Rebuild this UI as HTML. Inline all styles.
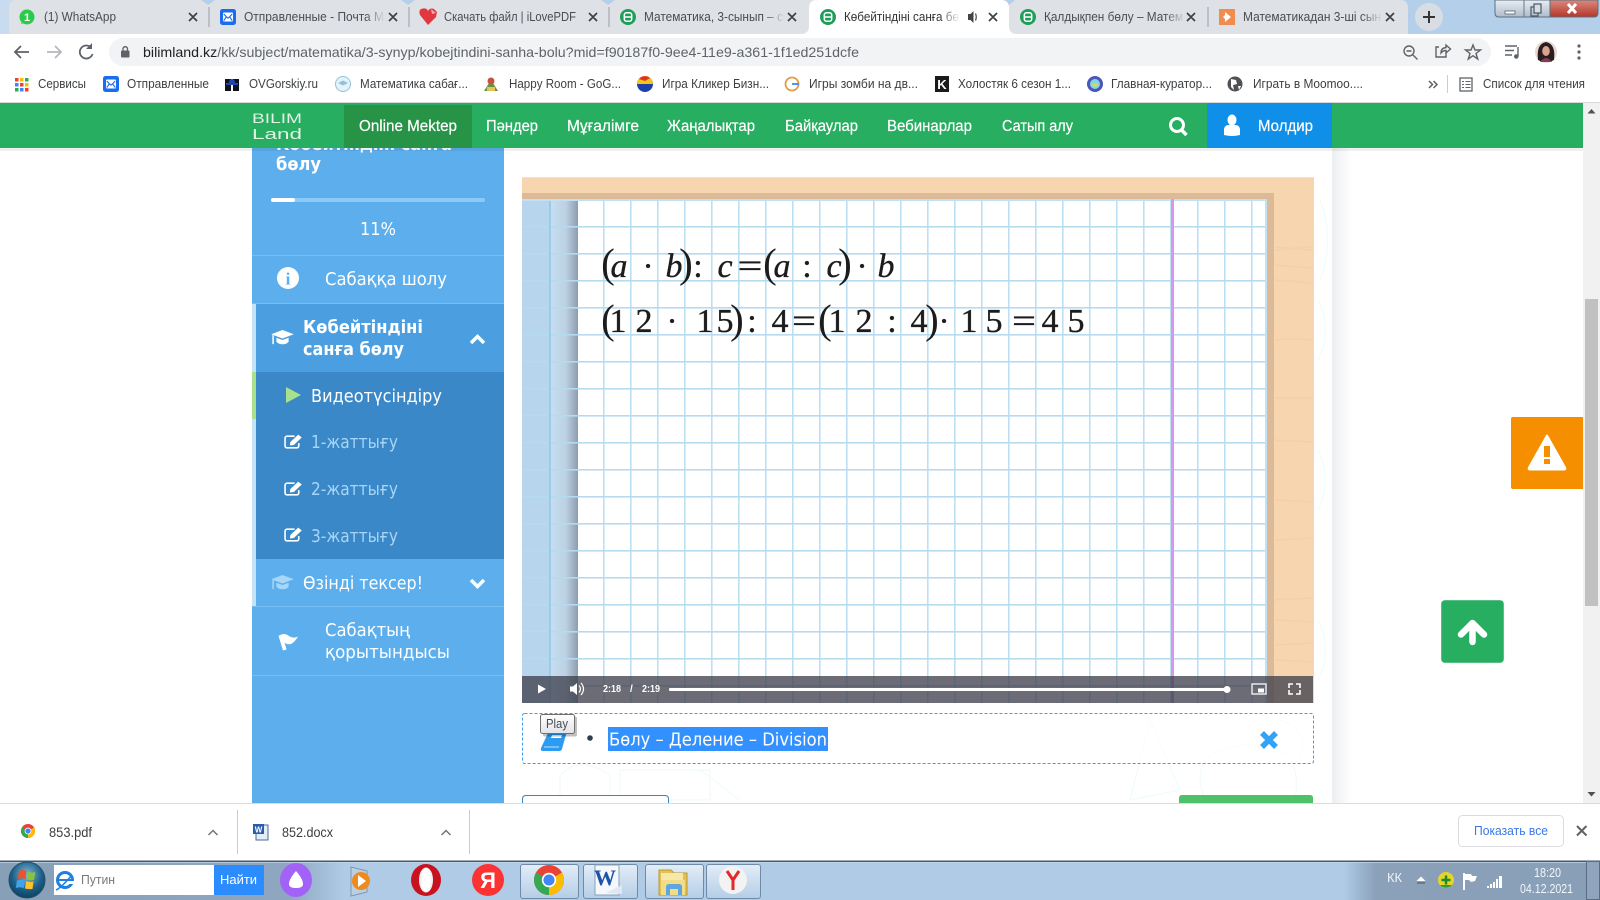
<!DOCTYPE html>
<html lang="kk"><head><meta charset="utf-8"><title>Көбейтіндіні санға бөлу</title>
<style>
html,body{margin:0;padding:0;width:1600px;height:900px;overflow:hidden;background:#fff}
svg{display:block}
text{white-space:pre}
.ui{font-family:"Liberation Sans","DejaVu Sans",sans-serif;font-size:12.5px;fill:#3c4043}
.tab{font-size:12.5px;fill:#4a4d52}
.bm{font-size:12.5px;fill:#3c4043}
.nav{font-family:"Liberation Sans","DejaVu Sans",sans-serif;font-size:15.5px;fill:#fff;stroke:#fff;stroke-width:.2px}
.sb{font-family:"DejaVu Sans",sans-serif;font-size:18px;fill:#fff}
.sbb{font-family:"DejaVu Sans",sans-serif;font-size:18px;font-weight:bold;fill:#fff}
.ex{fill:#a6d5f7}
.m{font-family:"Liberation Serif","DejaVu Serif",serif;font-size:34px;fill:#1c1c1c;stroke:#1c1c1c;stroke-width:.35px;text-anchor:middle}
.mp{font-size:41px;stroke-width:0}
.mi{font-style:italic}
.ctl{font-family:"Liberation Sans",sans-serif;font-size:10px;font-weight:bold;fill:#fff}
</style></head><body>
<svg width="1600" height="900" viewBox="0 0 1600 900" xmlns="http://www.w3.org/2000/svg">
<defs>
<linearGradient id="fade" x1="0" x2="1" y1="0" y2="0"><stop offset="0" stop-color="#dee1e6" stop-opacity="0"/><stop offset="1" stop-color="#dee1e6"/></linearGradient>
<linearGradient id="fadeW" x1="0" x2="1" y1="0" y2="0"><stop offset="0" stop-color="#fff" stop-opacity="0"/><stop offset="1" stop-color="#fff"/></linearGradient>
<linearGradient id="marg" x1="0" x2="1" y1="0" y2="0"><stop offset="0" stop-color="#c6dff1"/><stop offset=".55" stop-color="#bdd2e4"/><stop offset="1" stop-color="#8c9eae"/></linearGradient>
<linearGradient id="shad" x1="0" x2="1" y1="0" y2="0"><stop offset="0" stop-color="#eceef1"/><stop offset="1" stop-color="#fff"/></linearGradient>
<linearGradient id="tb" x1="0" x2="1" y1="0" y2="0"><stop offset="0" stop-color="#889fb8"/><stop offset=".18" stop-color="#8ea6c0"/><stop offset=".215" stop-color="#afcbe6"/><stop offset=".84" stop-color="#afcbe6"/><stop offset=".86" stop-color="#8aa1b9"/><stop offset="1" stop-color="#889fb7"/></linearGradient>
<linearGradient id="btn" x1="0" x2="0" y1="0" y2="1"><stop offset="0" stop-color="#e3eef8"/><stop offset="1" stop-color="#b4cde6"/></linearGradient>
<linearGradient id="tip" x1="0" x2="0" y1="0" y2="1"><stop offset="0" stop-color="#fff"/><stop offset="1" stop-color="#e2e3ea"/></linearGradient>
<radialGradient id="orb" cx=".5" cy=".35" r=".7"><stop offset="0" stop-color="#7fb8d8"/><stop offset=".6" stop-color="#1b5f86"/><stop offset="1" stop-color="#0d3b58"/></radialGradient>
<linearGradient id="ctrl" x1="0" x2="0" y1="0" y2="1"><stop offset="0" stop-color="#e8edf3"/><stop offset="1" stop-color="#aebccb"/></linearGradient>
<linearGradient id="clo" x1="0" x2="0" y1="0" y2="1"><stop offset="0" stop-color="#d98a7e"/><stop offset="1" stop-color="#b5362a"/></linearGradient>
<pattern id="gv" patternUnits="userSpaceOnUse" x="603" y="0" width="27" height="10"><rect x="0" y="0" width="1.6" height="10" fill="#bbdff3"/></pattern>
<pattern id="gh" patternUnits="userSpaceOnUse" x="0" y="226" width="10" height="27"><rect x="0" y="0" width="10" height="1.6" fill="#b6daee"/></pattern>
<symbol id="chrome" viewBox="-1 -1 2 2">
<circle r="1" fill="#ea4335"/>
<path d="M0 0L.866 -.5A1 1 0 0 1 0 1Z" fill="#fbbc04"/>
<path d="M0 0L0 1A1 1 0 0 1 -.866 -.5Z" fill="#34a853"/>
<circle r=".48" fill="#fff"/><circle r=".37" fill="#4285f4"/>
</symbol>
<symbol id="bfav" viewBox="0 0 16 16">
<circle cx="8" cy="8" r="8" fill="#1e9e58"/>
<rect x="4.3" y="3.8" width="7.4" height="8.4" rx="2.2" fill="none" stroke="#fff" stroke-width="1.5"/>
<path d="M4.3 8H11.7" stroke="#fff" stroke-width="1.5"/>
</symbol>
<symbol id="mail" viewBox="0 0 16 16">
<rect width="16" height="16" rx="2.5" fill="#1a6cf0"/>
<rect x="3" y="3.5" width="10" height="9" rx="1" fill="#fff"/>
<path d="M3.8 5l2.6 2.8L8 9.2l1.6-1.4L12.2 5M3.8 11.5l2.6-3.7M12.2 11.5L9.6 7.8" fill="none" stroke="#1a6cf0" stroke-width="1.1"/>
</symbol>
<symbol id="cap" viewBox="0 0 24 17">
<path d="M12 0L24 4.5 12 9 0 4.5Z" fill="currentColor"/>
<path d="M5.5 8.2V12.5C7.5 14.6 9.5 15.2 12 15.2S17 14.4 18.5 12.5V8.2L12 10.6Z" fill="currentColor"/>
<path d="M2 5.5V15" stroke="currentColor" stroke-width="1.6"/>
</symbol>
<symbol id="edit" viewBox="0 0 18 14">
<path d="M14 8.5V11.2A1.8 1.8 0 0 1 12.2 13H2.8A1.8 1.8 0 0 1 1 11.2V3.8A1.8 1.8 0 0 1 2.8 2H10" fill="none" stroke="#fff" stroke-width="1.5"/>
<path d="M6 7.5L13.5 0.5L16.8 3.2L9.3 10.3L5.6 10.8Z" fill="#fff"/>
</symbol>
</defs>

<!-- tab strip -->
<g id="tabs">
<rect width="1600" height="34" fill="#b4cfe9"/>
<rect width="200" height="34" fill="#c9dcef"/>
<path d="M9 34V8Q9 0 17 0H1400Q1408 0 1408 8V34Z" fill="#dee1e6"/>
<path d="M209 7V27M409 7V27M609 7V27M1208 7V27" stroke="#9aa0a6" stroke-width="1"/>
<path d="M201 0L208 5 215 0ZM401 0L408 5 415 0ZM601 0L608 5 615 0ZM1003 0L1009 5 1015 0Z" fill="#b4cfe9"/>
<path d="M801 34Q809 34 809 26V8Q809 0 817 0H1001Q1009 0 1009 8V26Q1009 34 1017 34Z" fill="#fff"/>
<!-- favicons -->
<circle cx="27" cy="17" r="7.5" fill="#2bcb4a"/><path d="M21 24l1.5-4 3 2.5Z" fill="#2bcb4a"/>
<text x="27" y="21" font-family="Liberation Sans" font-size="11" font-weight="bold" fill="#fff" text-anchor="middle">1</text>
<use href="#mail" x="220" y="9" width="16" height="16"/>
<path d="M428 25L420 15Q418 9 423 8.500Q427 8 428 11Q430 7.500 434 9L437 12 436 17Z" fill="#e2373f"/><path d="M431 9l5 4-4 1Z" fill="#f7a9ad"/>
<use href="#bfav" x="620" y="9" width="16" height="16"/>
<use href="#bfav" x="820" y="9" width="16" height="16"/>
<use href="#bfav" x="1020" y="9" width="16" height="16"/>
<rect x="1219" y="9" width="16" height="16" fill="#ef8c4e"/><path d="M1225 12l6 5-6 5v-3l-2-2 2-2Z" fill="#fff"/>
<!-- titles -->
<g class="ui">
<text class="ui tab" x="44" y="21" textLength="72" lengthAdjust="spacingAndGlyphs">(1) WhatsApp</text>
<text class="ui tab" x="244" y="21" textLength="140" lengthAdjust="spacingAndGlyphs">Отправленные - Почта M</text>
<text class="ui tab" x="444" y="21" textLength="132" lengthAdjust="spacingAndGlyphs">Скачать файл | iLovePDF</text>
<text class="ui tab" x="644" y="21" textLength="139" lengthAdjust="spacingAndGlyphs">Математика, 3-сынып – с</text>
<text class="ui tab" x="844" y="21" textLength="115" lengthAdjust="spacingAndGlyphs" style="fill:#333">Көбейтіндіні санға бө</text>
<text class="ui tab" x="1044" y="21" textLength="139" lengthAdjust="spacingAndGlyphs">Қалдықпен бөлу – Матем</text>
<text class="ui tab" x="1243" y="21" textLength="138" lengthAdjust="spacingAndGlyphs">Математикадан 3-ші сын</text>
</g>
<rect x="365" y="6" width="20" height="22" fill="url(#fade)"/>
<rect x="765" y="6" width="20" height="22" fill="url(#fade)"/>
<rect x="940" y="6" width="20" height="22" fill="url(#fadeW)"/>
<rect x="1165" y="6" width="20" height="22" fill="url(#fade)"/>
<rect x="1362" y="6" width="20" height="22" fill="url(#fade)"/>
<!-- close x -->
<g stroke="#3c4043" stroke-width="1.7" fill="none">
<path d="M189 13l8 8M197 13l-8 8M389 13l8 8M397 13l-8 8M589 13l8 8M597 13l-8 8M788 13l8 8M796 13l-8 8M989 13l8 8M997 13l-8 8M1187 13l8 8M1195 13l-8 8M1386 13l8 8M1394 13l-8 8"/>
</g>
<path d="M968 14h2.500l3-3v12l-3-3H968Z" fill="#444"/><path d="M975.500 13.500q1.500 3.500 0 7" fill="none" stroke="#444" stroke-width="1.200"/>
<circle cx="1429" cy="17" r="14" fill="#d8dde3"/>
<path d="M1429 11v12M1423 17h12" stroke="#333" stroke-width="2"/>
<!-- window controls -->
<path d="M1495 0H1550V17H1499Q1495 17 1495 13Z" fill="url(#ctrl)" stroke="#5e6f80"/>
<path d="M1524 0V17" stroke="#6a7a8a"/>
<path d="M1550 0H1598V13Q1598 17 1594 17H1550Z" fill="url(#clo)" stroke="#5e6f80"/>
<rect x="1505" y="11" width="10" height="3" fill="#fff" stroke="#56616e" stroke-width=".8"/>
<rect x="1531" y="7" width="7" height="9" fill="none" stroke="#4c5763" stroke-width="1.200"/><rect x="1534" y="4" width="7" height="9" fill="#d5dde5" stroke="#4c5763" stroke-width="1.200"/>
<path d="M1568 4l8 9M1576 4l-8 9" stroke="#fff" stroke-width="3"/>
</g>

<!-- toolbar -->
<g id="toolbar">
<rect y="34" width="1600" height="34" fill="#fff"/>
<path d="M29 52H15M21 46l-6 6 6 6" fill="none" stroke="#5f6368" stroke-width="1.800"/>
<path d="M47 52H61M55 46l6 6-6 6" fill="none" stroke="#b5b8bc" stroke-width="1.800"/>
<path d="M91 47.500A6.500 6.500 0 1 0 92.500 54" fill="none" stroke="#5f6368" stroke-width="1.800"/><path d="M92 43v6h-6Z" fill="#5f6368"/>
<rect x="109" y="38" width="1382" height="28" rx="14" fill="#f1f3f4"/>
<rect x="121" y="50.500" width="8.500" height="7" rx="1" fill="#5f6368"/><path d="M123 51v-2.500a2.300 2.300 0 0 1 4.500 0V51" fill="none" stroke="#5f6368" stroke-width="1.300"/>
<text class="ui" x="143" y="57" font-size="14" textLength="716" lengthAdjust="spacingAndGlyphs" style="font-size:14px;fill:#5f6368"><tspan fill="#202124">bilimland.kz</tspan>/kk/subject/matematika/3-synyp/kobejtindini-sanha-bolu?mid=f90187f0-9ee4-11e9-a361-1f1ed251dcfe</text>
<g fill="none" stroke="#5f6368" stroke-width="1.400">
<circle cx="1409" cy="51" r="5"/><path d="M1413 55l4.500 4.500M1406.500 51h5"/>
<path d="M1446 53v4h-10v-10h3M1441 53q0-5 5-5.500V45l4.500 4-4.500 4v-2.500q-3 0-5 2.500Z"/>
<path d="M1473 45l2 5h5.500l-4.500 3.500 1.700 5.500-4.700-3.300-4.700 3.300 1.700-5.500-4.500-3.500h5.500Z"/>
<path d="M1505 46h12M1505 50.500h9M1505 55h7"/><path d="M1518 47v9" /><circle cx="1516.300" cy="56.500" r="1.600" fill="#5f6368"/>
</g>
<circle cx="1546" cy="52" r="11" fill="#e8d8d4"/><path d="M1538 60q-2-16 8-18 10 2 8 18-8 4-16 0Z" fill="#2b1d1e"/><ellipse cx="1546" cy="51" rx="3.800" ry="5" fill="#d9a48e"/><path d="M1540 62q6-8 12 0Z" fill="#7d3f55"/>
<circle cx="1579" cy="46" r="1.600" fill="#5f6368"/><circle cx="1579" cy="52" r="1.600" fill="#5f6368"/><circle cx="1579" cy="58" r="1.600" fill="#5f6368"/>
</g>

<!-- bookmarks -->
<g id="bookmarks">
<rect y="68" width="1600" height="34" fill="#fff"/><rect y="102" width="1600" height="1" fill="#d8d8d8"/>
<g>
<rect x="15" y="78" width="3.500" height="3.500" fill="#ea4335"/><rect x="20" y="78" width="3.500" height="3.500" fill="#fbbc04"/><rect x="25" y="78" width="3.500" height="3.500" fill="#34a853"/>
<rect x="15" y="83" width="3.500" height="3.500" fill="#4285f4"/><rect x="20" y="83" width="3.500" height="3.500" fill="#ea4335"/><rect x="25" y="83" width="3.500" height="3.500" fill="#fbbc04"/>
<rect x="15" y="88" width="3.500" height="3.500" fill="#34a853"/><rect x="20" y="88" width="3.500" height="3.500" fill="#4285f4"/><rect x="25" y="88" width="3.500" height="3.500" fill="#ea4335"/>
</g>
<use href="#mail" x="103" y="76" width="16" height="16"/>
<path d="M225 79h6v12h-6ZM233 79h6v12h-6Z" fill="#10131c"/><circle cx="232" cy="82" r="3" fill="#2146b0"/><path d="M226 84h12" stroke="#2146b0" stroke-width="2"/>
<circle cx="343" cy="84" r="7.500" fill="#e5f2f7" stroke="#8fc3db"/><path d="M338 83l5-2.500 5 2.500-5 2.500Z" fill="#8fc3db"/>
<path d="M484 91l7-11 7 11Z" fill="#6a8f3f"/><circle cx="491" cy="81" r="3.500" fill="#c7513e"/><rect x="487" y="87" width="8" height="4" fill="#e1c65a"/>
<circle cx="645" cy="84" r="8" fill="#1d3fa8"/><path d="M637 84a8 8 0 0 1 16 0Z" fill="#f5c518"/><path d="M639 79a8 8 0 0 1 11-1l-5 3Z" fill="#e53123"/>
<circle cx="792" cy="84" r="6.500" fill="none" stroke="#e49b44" stroke-width="1.800"/><path d="M792 84h7" stroke="#4285f4" stroke-width="1.800"/>
<rect x="935" y="76" width="14" height="16" fill="#1a1a1a"/><text x="942" y="89" font-family="Liberation Sans" font-size="13" font-weight="bold" fill="#fff" text-anchor="middle">K</text>
<circle cx="1095" cy="84" r="8" fill="#4b56b8"/><circle cx="1095" cy="84" r="5" fill="#7fd7e5"/><path d="M1091 85q4-3 8 0l-4 2Z" fill="#e6d555"/>
<circle cx="1235" cy="84" r="7.500" fill="#4e5256"/><path d="M1231 79l5 1 1 4-4 1 1 5-3-3ZM1238 86l3 0-2 4Z" fill="#fff"/>
<g class="ui">
<text class="ui bm" x="38" y="88" textLength="48" lengthAdjust="spacingAndGlyphs">Сервисы</text>
<text class="ui bm" x="127" y="88" textLength="82" lengthAdjust="spacingAndGlyphs">Отправленные</text>
<text class="ui bm" x="249" y="88" textLength="69" lengthAdjust="spacingAndGlyphs">OVGorskiy.ru</text>
<text class="ui bm" x="360" y="88" textLength="108" lengthAdjust="spacingAndGlyphs">Математика сабағ...</text>
<text class="ui bm" x="509" y="88" textLength="112" lengthAdjust="spacingAndGlyphs">Happy Room - GoG...</text>
<text class="ui bm" x="662" y="88" textLength="107" lengthAdjust="spacingAndGlyphs">Игра Кликер Бизн...</text>
<text class="ui bm" x="809" y="88" textLength="109" lengthAdjust="spacingAndGlyphs">Игры зомби на дв...</text>
<text class="ui bm" x="958" y="88" textLength="113" lengthAdjust="spacingAndGlyphs">Холостяк 6 сезон 1...</text>
<text class="ui bm" x="1111" y="88" textLength="101" lengthAdjust="spacingAndGlyphs">Главная-куратор...</text>
<text class="ui bm" x="1253" y="88" textLength="110" lengthAdjust="spacingAndGlyphs">Играть в Moomoo....</text>
<text class="ui bm" x="1483" y="88" textLength="102" lengthAdjust="spacingAndGlyphs">Список для чтения</text>
</g>
<path d="M1429 81l3.500 3.500-3.500 3.500M1433.500 81l3.500 3.500-3.500 3.500" fill="none" stroke="#5f6368" stroke-width="1.500"/>
<path d="M1447.500 75v18" stroke="#ccc"/>
<rect x="1460" y="78" width="12" height="13" fill="none" stroke="#5f6368" stroke-width="1.300"/><path d="M1462 81.500h2M1465.500 81.500h5M1462 84.500h2M1465.500 84.500h5M1462 87.500h2M1465.500 87.500h5" stroke="#5f6368"/>
</g>

<!-- page -->
<g id="page">
<rect y="103" width="1583" height="700" fill="#fff"/>
<rect x="1332" y="148" width="20" height="655" fill="url(#shad)"/>
<!-- faint doodles -->
<g fill="none" stroke="#f1fbfb" stroke-width="1.200">
<path d="M1150 720l30 70-50 10ZM1205 800q-20-50 40-55t50 55M700 770l40 30M560 775q20-20 50 0v25h-50ZM620 770h90v30h-90ZM1280 720q30 10 20 40M1320 200q15 40 0 80M1318 300q15 30 0 60M1318 450q15 30 0 60M1318 620q15 30 0 60"/>
</g>
<!-- video -->
<rect x="522" y="177" width="792" height="526" fill="#f7d5ae"/>
<rect x="522" y="177" width="792" height="1" fill="#dfe6ea"/>
<g fill="none" stroke="#f3d0a9" stroke-width="1.500">
<path d="M1275 250l38-3M1275 247l38 3M1275 265q20 2 38 3M1275 280l38 3M1275 340q20-2 38 0M1275 398h38M1275 440l38 2M1275 500l38 2M1275 540l38-2M1275 600l38-2M1275 620l38 2M1275 645l38-2M1275 660l38 2"/>
</g>
<rect x="522" y="193" width="752" height="6" fill="#dcb997"/>
<rect x="1266" y="193" width="8" height="510" fill="#dcb997"/>
<rect x="522" y="199" width="744" height="504" fill="#fff"/>
<rect x="522" y="199" width="28" height="504" fill="#b7d6ee"/>
<rect x="550" y="199" width="28" height="504" fill="url(#marg)"/>
<rect x="578" y="199" width="688" height="504" fill="url(#gv)"/>
<rect x="522" y="199" width="744" height="504" fill="url(#gh)"/>
<rect x="549" y="199" width="2" height="504" fill="#9ccbe9"/>
<rect x="522" y="199" width="744" height="2" fill="#bfe1f3"/>
<rect x="1265" y="199" width="2" height="504" fill="#c0e2f3"/>
<rect x="1171" y="199" width="3" height="504" fill="#d996ec"/>
<!-- formula -->
<g>
<text class="m mp" x="608" y="277">(</text><text class="m mi" x="619" y="277">a</text><text class="m" x="648" y="277">·</text><text class="m mi" x="674" y="277">b</text><text class="m mp" x="686" y="277">)</text><text class="m" x="698" y="277">:</text><text class="m mi" x="725" y="277">c</text>
<text class="m" x="750" y="277" textLength="25" lengthAdjust="spacingAndGlyphs">=</text>
<text class="m mp" x="770" y="277">(</text><text class="m mi" x="782" y="277">a</text><text class="m" x="807" y="277">:</text><text class="m mi" x="834" y="277">c</text><text class="m mp" x="845" y="277">)</text><text class="m" x="862" y="277">·</text><text class="m mi" x="886" y="277">b</text>
<text class="m mp" x="608" y="333">(</text><text class="m" x="618" y="332">1</text><text class="m" x="644" y="332">2</text><text class="m" x="672" y="332">·</text><text class="m" x="705" y="332">1</text><text class="m" x="725" y="332">5</text><text class="m mp" x="737" y="333">)</text><text class="m" x="752" y="332">:</text><text class="m" x="780" y="332">4</text>
<text class="m" x="804" y="332" textLength="24" lengthAdjust="spacingAndGlyphs">=</text>
<text class="m mp" x="825" y="333">(</text><text class="m" x="837" y="332">1</text><text class="m" x="864" y="332">2</text><text class="m" x="892" y="332">:</text><text class="m" x="919" y="332">4</text><text class="m mp" x="932" y="333">)</text><text class="m" x="944" y="332">·</text><text class="m" x="969" y="332">1</text><text class="m" x="994" y="332">5</text>
<text class="m" x="1024" y="332" textLength="24" lengthAdjust="spacingAndGlyphs">=</text>
<text class="m" x="1050" y="332">4</text><text class="m" x="1076" y="332">5</text>
</g>
<!-- controls -->
<rect x="522" y="676" width="791" height="27" fill="#3c3e4b" fill-opacity=".76"/>
<path d="M538 684.500l8 4.500-8 4.500Z" fill="#fff"/>
<path d="M570 686.500h3l4-3.500v12l-4-3.500h-3Z" fill="#fff"/><path d="M579 685.500q3 3.500 0 7M581 683q5 6 0 12" fill="none" stroke="#fff" stroke-width="1.200"/>
<text class="ctl" x="603" y="692" textLength="18" lengthAdjust="spacingAndGlyphs">2:18</text>
<text class="ctl" x="630" y="692">/</text>
<text class="ctl" x="642" y="692" textLength="18" lengthAdjust="spacingAndGlyphs">2:19</text>
<rect x="669" y="688" width="558" height="3" rx="1" fill="#fff"/><circle cx="1227" cy="689.500" r="3.500" fill="#fff"/>
<rect x="1252" y="684" width="14" height="10" fill="none" stroke="#e8e8e8" stroke-width="1.500"/><rect x="1258" y="688.500" width="6" height="4" fill="#fff"/>
<path d="M1289 688v-4h4M1296 684h4v4M1300 690v4h-4M1293 694h-4v-4" fill="none" stroke="#fff" stroke-width="1.600"/>
<!-- glossary row -->
<rect x="522.500" y="713.500" width="791" height="50" rx="2" fill="#fff" fill-opacity=".6" stroke="#3a9df0" stroke-dasharray="3 2"/>
<path d="M549 731h18l-5 18q-.6 2-3 2h-16q-3 0-2-3Z" fill="#2c9cf2"/><path d="M552 735h10l-1 3h-10Z" fill="#fff"/><path d="M544 747h15" stroke="#bfe2fb" stroke-width="1"/>
<rect x="541" y="714.500" width="34" height="20" rx="2" fill="#000" opacity=".25" transform="translate(2 2)"/>
<rect x="540.500" y="714.500" width="34" height="19" rx="2" fill="url(#tip)" stroke="#6f6f6f"/>
<text class="ui" x="546" y="728" textLength="22" lengthAdjust="spacingAndGlyphs" style="fill:#4a4a4a">Play</text>
<circle cx="590" cy="738" r="2.800" fill="#2d3e50"/>
<rect x="608" y="727" width="220" height="24" fill="#3390ff"/>
<text class="sb" x="609" y="745.500" textLength="218" lengthAdjust="spacingAndGlyphs">Бөлу – Деление – Division</text>
<path d="M1262 733l14 14M1276 733l-14 14" stroke="#33a3f5" stroke-width="5.500"/>
<!-- bottom buttons -->
<path d="M522.500 804V799Q522.500 795.500 526 795.500H665Q668.500 795.500 668.500 799V804" fill="#fff" stroke="#3a85c0"/>
<path d="M1179 804V798Q1179 795 1182 795H1310Q1313 795 1313 798V804Z" fill="#4fc16a"/>
<!-- sidebar -->
<rect x="252" y="148" width="252" height="655" fill="#5daeec"/>
<text class="sbb" x="276" y="150" textLength="176" lengthAdjust="spacingAndGlyphs">Көбейтіндіні санға</text>
<text class="sbb" x="276" y="170" textLength="45" lengthAdjust="spacingAndGlyphs">бөлу</text>
<rect x="271" y="198" width="214" height="4" rx="2" fill="#8cc9f8"/><rect x="271" y="198" width="24" height="4" rx="2" fill="#fff"/>
<text class="sb" x="360" y="235" textLength="36" lengthAdjust="spacingAndGlyphs">11%</text>
<rect x="252" y="255" width="252" height="1" fill="#7abff2"/>
<circle cx="288" cy="278" r="11" fill="#fff"/>
<text x="288" y="284.500" font-family="Liberation Serif" font-size="17" font-weight="bold" fill="#5daeec" text-anchor="middle">i</text>
<text class="sb" x="325" y="285" textLength="122" lengthAdjust="spacingAndGlyphs">Сабаққа шолу</text>
<rect x="252" y="303" width="252" height="1" fill="#7abff2"/>
<rect x="252" y="304" width="4" height="302" fill="#c4e3f8"/>
<rect x="252" y="372" width="4" height="47" fill="#a7e18c"/>
<rect x="256" y="304" width="248" height="68" fill="#4b9fe0"/>
<use href="#cap" x="271" y="330" width="23" height="16" color="#fff"/>
<text class="sbb" x="303" y="333" textLength="120" lengthAdjust="spacingAndGlyphs">Көбейтіндіні</text>
<text class="sbb" x="303" y="355" textLength="101" lengthAdjust="spacingAndGlyphs">санға бөлу</text>
<path d="M471 343l6.500-6.500 6.500 6.500" fill="none" stroke="#fff" stroke-width="3.500"/>
<rect x="256" y="372" width="248" height="187" fill="#3a88c8"/>
<path d="M286 387l15 8-15 8Z" fill="#a7e18c"/>
<text class="sb" x="311" y="402" textLength="131" lengthAdjust="spacingAndGlyphs">Видеотүсіндіру</text>
<use href="#edit" x="284" y="434" width="19" height="15"/>
<text class="sb ex" x="311" y="448" textLength="87" lengthAdjust="spacingAndGlyphs" style="fill:#a6d5f7">1-жаттығу</text>
<use href="#edit" x="284" y="481" width="19" height="15"/>
<text class="sb ex" x="311" y="495" textLength="87" lengthAdjust="spacingAndGlyphs" style="fill:#a6d5f7">2-жаттығу</text>
<use href="#edit" x="284" y="527" width="19" height="15"/>
<text class="sb ex" x="311" y="542" textLength="87" lengthAdjust="spacingAndGlyphs" style="fill:#a6d5f7">3-жаттығу</text>
<use href="#cap" x="271" y="575" width="23" height="16" color="#a6d6f8"/>
<text class="sb" x="303" y="589" textLength="120" lengthAdjust="spacingAndGlyphs">Өзінді тексер!</text>
<path d="M471 580l6.500 6.500 6.500-6.500" fill="none" stroke="#fff" stroke-width="3.500"/>
<rect x="252" y="606" width="252" height="1" fill="#7abff2"/>
<path d="M278.500 636Q284 632 289 636Q293 639 298 636.500Q295 642 291 644Q287 645 284.500 642.500L286.500 649.500L283 650.500Z" fill="#fff"/>
<text class="sb" x="325" y="636" textLength="85" lengthAdjust="spacingAndGlyphs">Сабақтың</text>
<text class="sb" x="325" y="658" textLength="125" lengthAdjust="spacingAndGlyphs">қорытындысы</text>
<rect x="252" y="675" width="252" height="1" fill="#7abff2"/>
<!-- floating -->
<path d="M1511 419q0-2 2-2h70v72h-70q-2 0-2-2Z" fill="#f58f00"/>
<path d="M1547 435.500l18 32q1 2-1 2h-34q-2 0-1-2Z" fill="#fff" stroke="#fff" stroke-linejoin="round" stroke-width="2"/>
<rect x="1544" y="446" width="6" height="11" fill="#f58f00"/><rect x="1544" y="459" width="6" height="5" fill="#f58f00"/>
<rect x="1441" y="600" width="63" height="63" rx="4" fill="#27ae60" stroke="#eee" stroke-width=".5"/>
<path d="M1472.500 642V624M1461 634.500l11.500-11.500L1484 634.500" fill="none" stroke="#fff" stroke-width="6.500" stroke-linecap="round" stroke-linejoin="round"/>
</g>

<!-- nav -->
<g id="nav">
<rect y="148" width="1583" height="3" fill="#000" opacity=".06"/>
<rect y="103" width="1583" height="45" fill="#27ae60"/>
<text x="252" y="123" font-family="Liberation Sans" font-size="14" fill="#dff3e6" textLength="50" lengthAdjust="spacingAndGlyphs">BILIM</text>
<text x="252" y="139" font-family="Liberation Sans" font-size="15" fill="#dff3e6" textLength="50" lengthAdjust="spacingAndGlyphs">Land</text>
<rect x="344" y="105" width="128" height="43" fill="#279347"/>
<text class="nav" x="359" y="131" textLength="98" lengthAdjust="spacingAndGlyphs">Online Mektep</text>
<text class="nav" x="486" y="131" textLength="52" lengthAdjust="spacingAndGlyphs">Пәндер</text>
<text class="nav" x="567" y="131" textLength="72" lengthAdjust="spacingAndGlyphs">Мұғалімге</text>
<text class="nav" x="667" y="131" textLength="88" lengthAdjust="spacingAndGlyphs">Жаңалықтар</text>
<text class="nav" x="785" y="131" textLength="73" lengthAdjust="spacingAndGlyphs">Байқаулар</text>
<text class="nav" x="887" y="131" textLength="85" lengthAdjust="spacingAndGlyphs">Вебинарлар</text>
<text class="nav" x="1002" y="131" textLength="71" lengthAdjust="spacingAndGlyphs">Сатып алу</text>
<circle cx="1177" cy="125" r="6.500" fill="none" stroke="#fff" stroke-width="3"/><path d="M1181.500 130l5 5" stroke="#fff" stroke-width="3.500"/>
<rect x="1207" y="103" width="125" height="45" fill="#0f8fe8"/>
<ellipse cx="1232" cy="120" rx="4.500" ry="5.500" fill="#fff"/><path d="M1224 135v-5q0-5 5-5h6q5 0 5 5v5q-8 2-16 0Z" fill="#fff"/>
<text class="nav" x="1258" y="131" textLength="55" lengthAdjust="spacingAndGlyphs">Молдир</text>
</g>

<!-- scrollbar -->
<g id="scroll">
<rect x="1583" y="103" width="17" height="700" fill="#f1f1f1"/>
<path d="M1591.500 109l4 4.500h-8Z" fill="#505050"/>
<rect x="1585" y="299" width="13" height="307" fill="#c1c1c1"/>
<path d="M1591.500 796.500l-4-4.500h8Z" fill="#505050"/>
</g>

<!-- downloads -->
<g id="downloads">
<rect y="803" width="1600" height="58" fill="#fff"/><rect y="803" width="1600" height="1" fill="#dcdcdc"/>
<use href="#chrome" x="21" y="824" width="14" height="14"/>
<text class="ui" x="49" y="837" textLength="43" lengthAdjust="spacingAndGlyphs" style="font-size:14px">853.pdf</text>
<path d="M208.500 835l4.500-4.500 4.500 4.500M441.500 835l4.500-4.500 4.500 4.500" fill="none" stroke="#70757a" stroke-width="1.500"/>
<path d="M237.500 810v44M469.500 810v44" stroke="#ccc"/>
<rect x="256" y="825" width="12" height="15" fill="#e4ecf6" stroke="#4a6a9c"/><rect x="253" y="824" width="11" height="10" fill="#2a5caa"/>
<text x="258.500" y="832.500" font-family="Liberation Sans" font-size="8" font-weight="bold" fill="#fff" text-anchor="middle">W</text>
<text class="ui" x="282" y="837" textLength="51" lengthAdjust="spacingAndGlyphs" style="font-size:14px">852.docx</text>
<rect x="1458.500" y="815.500" width="105" height="31" rx="4" fill="#fff" stroke="#dadce0"/>
<text class="ui" x="1474" y="835" textLength="74" lengthAdjust="spacingAndGlyphs" style="fill:#3b78e7">Показать все</text>
<path d="M1577 826l9.500 9.500M1586.500 826l-9.500 9.500" stroke="#5f6368" stroke-width="2"/>
</g>

<!-- taskbar -->
<g id="taskbar">
<rect y="861" width="1600" height="39" fill="url(#tb)"/>
<rect y="860.500" width="1600" height="1.500" fill="#46586b"/><rect y="862" width="1600" height="1" fill="#c8d8e8" opacity=".7"/>
<circle cx="27" cy="880" r="18" fill="url(#orb)" stroke="#23506e"/>
<path d="M19 871q4-2 7.500 0l-1 8q-4-1.500-8 0Z" fill="#e8542f"/><path d="M27.500 871.500q4 2 8 .5l-1.500 8q-4 1-7.500-.5Z" fill="#86c440"/><path d="M17 880.500q4-1.500 8 0l-1.200 7.500q-4-1.500-8 0Z" fill="#41a4ea"/><path d="M26 881q4 1.500 7.500.5l-1 7.500q-4 .5-7.500-.5Z" fill="#fbc12e"/>
<rect x="54" y="865" width="160" height="30" fill="#fff"/>
<rect x="214" y="865" width="50" height="30" fill="#2a8cff"/>
<g fill="none" stroke="#1e7fe0"><ellipse cx="65" cy="880" rx="7.500" ry="7.500" stroke-width="3"/><path d="M58 880h14" stroke-width="2"/><path d="M56 890q5-2 15-14" stroke-width="1.500"/></g>
<rect x="68" y="881" width="7" height="3" fill="#fff"/>
<text class="ui" x="81" y="884" textLength="34" lengthAdjust="spacingAndGlyphs" style="fill:#77797c">Путин</text>
<text class="ui" x="220" y="884" textLength="37" lengthAdjust="spacingAndGlyphs" style="fill:#fff">Найти</text>
<ellipse cx="296" cy="880" rx="16" ry="17" fill="#a362f7"/><path d="M296 871q7 8 7 13 0 4-7 4t-7-4q0-5 7-13Z" fill="#fff"/>
<path d="M351 867l16 4v21l-16 4Z" fill="#b9cfe2" stroke="#7f98b0"/><circle cx="361" cy="881" r="9" fill="#f18a1c"/><path d="M358 875l8 6-8 6Z" fill="#fff"/>
<ellipse cx="426" cy="880" rx="15" ry="16" fill="#c8131f"/><ellipse cx="426" cy="880" rx="7" ry="12.500" fill="#f4f1f1"/><ellipse cx="426" cy="880" rx="4.500" ry="12" fill="#fff"/>
<circle cx="488" cy="880" r="16" fill="#fb3333"/><text x="488" y="888" font-family="Liberation Sans" font-size="22" font-weight="bold" fill="#fff" text-anchor="middle">Я</text>
<g stroke="#6f8aa6" fill="url(#btn)">
<rect x="520.500" y="864.500" width="58" height="34" rx="2.500"/>
<rect x="583.500" y="864.500" width="54" height="34" rx="2.500"/>
<rect x="645.500" y="864.500" width="58" height="34" rx="2.500"/>
<rect x="706.500" y="864.500" width="54" height="34" rx="2.500"/>
</g>
<use href="#chrome" x="534" y="865" width="30" height="30"/>
<rect x="595" y="865" width="24" height="30" fill="#f4f7fb" stroke="#8aa0bb"/><path d="M606 893l16-8v9Z" fill="#dfe7f0"/>
<text x="605" y="885" font-family="Liberation Serif" font-size="22" font-weight="bold" fill="#1d52ab" text-anchor="middle">W</text>
<path d="M659 870h12l3 3h13v22h-28Z" fill="#e5c24f" stroke="#b9992f"/><path d="M661 873h22v8h-22Z" fill="#f6e9a7"/><path d="M661 880h24v15h-24Z" fill="#f3dc87"/>
<path d="M666 895v-8q0-3 3-3h10q3 0 3 3v8h-4v-6h-8v6Z" fill="#5fa6e0"/>
<circle cx="733" cy="880" r="14" fill="#f3f3f3"/><path d="M727 871l6 9 6-9M733 880v10" fill="none" stroke="#e32a2a" stroke-width="3"/>
<text class="ui" x="1387" y="882" textLength="15" lengthAdjust="spacingAndGlyphs" style="fill:#eef3f8">КК</text>
<path d="M1421 876.500l4.500 4.500h-9Z" fill="#fff"/><path d="M1417 883h8" stroke="#41566b"/>
<circle cx="1446" cy="880" r="8" fill="#e4d52b"/><path d="M1440 885a8 8 0 0 0 12 0Z" fill="#2e9c35"/><path d="M1446 875.500v9M1441.500 880h9" stroke="#1f8a2d" stroke-width="2.500"/>
<path d="M1464 873v17" stroke="#fff" stroke-width="2"/><path d="M1465 874h6l1 2h5l-2 5 -4 1-2-2h-4Z" fill="#fff"/>
<g fill="#fff"><rect x="1487" y="886" width="2" height="2"/><rect x="1490" y="884" width="2" height="4"/><rect x="1493" y="882" width="2" height="6"/><rect x="1496" y="879" width="2" height="9"/><rect x="1499" y="876" width="3" height="12"/></g>
<text class="ui" x="1534" y="877" textLength="27" lengthAdjust="spacingAndGlyphs" style="fill:#f2f6fa">18:20</text>
<text class="ui" x="1520" y="893" textLength="53" lengthAdjust="spacingAndGlyphs" style="fill:#f2f6fa">04.12.2021</text>
<rect x="1586.500" y="861.500" width="13" height="38" fill="#90a5bd" stroke="#596d83"/>
</g>
</svg>
</body></html>
